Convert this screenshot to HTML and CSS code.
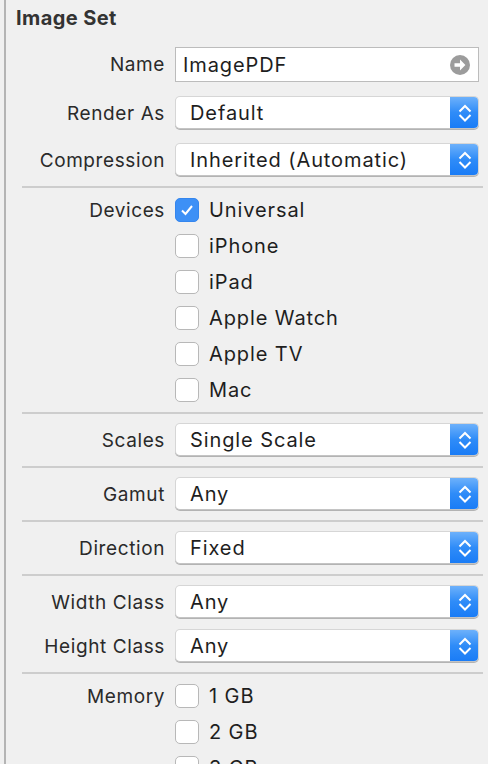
FILE: index.html
```html
<!DOCTYPE html>
<html>
<head>
<meta charset="utf-8">
<link rel="stylesheet" href="styles.css">
</head>
<body>
<div class="panel">
  <div class="title">Image Set</div>

  <div class="row row-name">
    <div class="label">Name</div>
    <div class="field">
      <span class="field-text">ImagePDF</span>
      <svg class="go" width="20" height="20" viewBox="0 0 20 20"><circle cx="10" cy="10" r="10" fill="#9c9c9c"/><path d="M4.5 8.2h5.5V4.6l5.4 5.4-5.4 5.4v-3.6H4.5z" fill="#fff"/></svg>
    </div>
  </div>

  <div class="row row-popup first">
    <div class="label">Render As</div>
    <div class="popup"><span class="popup-text">Default</span><span class="stepper"><svg width="16" height="24" viewBox="0 0 16 24"><path d="M2.5 10.5L8 5 13.5 10.5M2.5 14L8 19.5 13.5 14" fill="none" stroke="#fff" stroke-width="2"/></svg></span></div>
  </div>
  <div class="row row-popup">
    <div class="label">Compression</div>
    <div class="popup"><span class="popup-text">Inherited (Automatic)</span><span class="stepper"><svg width="16" height="24" viewBox="0 0 16 24"><path d="M2.5 10.5L8 5 13.5 10.5M2.5 14L8 19.5 13.5 14" fill="none" stroke="#fff" stroke-width="2"/></svg></span></div>
  </div>

  <div class="sep sep-a"></div>

  <div class="checks">
    <div class="check-row"><div class="label">Devices</div><span class="box checked"><svg width="14" height="12" viewBox="0 0 14 12"><path d="M2 6.5l3.5 3.5L12 2" fill="none" stroke="#fff" stroke-width="2"/></svg></span><span class="check-text">Universal</span></div>
    <div class="check-row"><div class="label"></div><span class="box"></span><span class="check-text">iPhone</span></div>
    <div class="check-row"><div class="label"></div><span class="box"></span><span class="check-text">iPad</span></div>
    <div class="check-row"><div class="label"></div><span class="box"></span><span class="check-text">Apple Watch</span></div>
    <div class="check-row"><div class="label"></div><span class="box"></span><span class="check-text">Apple TV</span></div>
    <div class="check-row"><div class="label"></div><span class="box"></span><span class="check-text">Mac</span></div>
  </div>

  <div class="sep"></div>
  <div class="row row-popup single">
    <div class="label">Scales</div>
    <div class="popup"><span class="popup-text">Single Scale</span><span class="stepper"><svg width="16" height="24" viewBox="0 0 16 24"><path d="M2.5 10.5L8 5 13.5 10.5M2.5 14L8 19.5 13.5 14" fill="none" stroke="#fff" stroke-width="2"/></svg></span></div>
  </div>
  <div class="sep"></div>
  <div class="row row-popup single">
    <div class="label">Gamut</div>
    <div class="popup"><span class="popup-text">Any</span><span class="stepper"><svg width="16" height="24" viewBox="0 0 16 24"><path d="M2.5 10.5L8 5 13.5 10.5M2.5 14L8 19.5 13.5 14" fill="none" stroke="#fff" stroke-width="2"/></svg></span></div>
  </div>
  <div class="sep"></div>
  <div class="row row-popup single">
    <div class="label">Direction</div>
    <div class="popup"><span class="popup-text">Fixed</span><span class="stepper"><svg width="16" height="24" viewBox="0 0 16 24"><path d="M2.5 10.5L8 5 13.5 10.5M2.5 14L8 19.5 13.5 14" fill="none" stroke="#fff" stroke-width="2"/></svg></span></div>
  </div>
  <div class="sep"></div>
  <div class="row row-popup pair-top">
    <div class="label">Width Class</div>
    <div class="popup"><span class="popup-text">Any</span><span class="stepper"><svg width="16" height="24" viewBox="0 0 16 24"><path d="M2.5 10.5L8 5 13.5 10.5M2.5 14L8 19.5 13.5 14" fill="none" stroke="#fff" stroke-width="2"/></svg></span></div>
  </div>
  <div class="row row-popup pair-bottom">
    <div class="label">Height Class</div>
    <div class="popup"><span class="popup-text">Any</span><span class="stepper"><svg width="16" height="24" viewBox="0 0 16 24"><path d="M2.5 10.5L8 5 13.5 10.5M2.5 14L8 19.5 13.5 14" fill="none" stroke="#fff" stroke-width="2"/></svg></span></div>
  </div>
  <div class="sep"></div>

  <div class="checks">
    <div class="check-row"><div class="label">Memory</div><span class="box"></span><span class="check-text">1 GB</span></div>
    <div class="check-row"><div class="label"></div><span class="box"></span><span class="check-text">2 GB</span></div>
    <div class="check-row"><div class="label"></div><span class="box"></span><span class="check-text">3 GB</span></div>
  </div>
</div>
</body>
</html>
```

FILE: styles.css
```css
html, body {
  margin: 0;
  padding: 0;
  height: 100%;
  overflow: hidden;
}
body {
  background: #f0f0f0;
  font-family: "Inter", "Liberation Sans", sans-serif;
  font-size: 19px;
  letter-spacing: 0.6px;
  color: #1e1e1e;
}
.panel {
  margin-left: 4px;
  border-left: 2px solid #b4b4b4;
  min-height: 100%;
  box-sizing: border-box;
}
.title {
  font-weight: 700;
  font-size: 20px;
  letter-spacing: 0.4px;
  line-height: 24px;
  padding: 6px 0 0 10px;
  height: 39px;
  box-sizing: border-box;
  color: #333;
}
.row {
  display: grid;
  grid-template-columns: 159px 304px;
  column-gap: 10px;
  align-items: center;
}
.label {
  text-align: right;
  color: #2a2a2a;
  white-space: nowrap;
}
.row-name {
  margin-top: 8px;
}
.field {
  height: 35px;
  box-sizing: border-box;
  border: 1px solid #bcbcbc;
  background: #fff;
  display: flex;
  align-items: center;
  padding: 0 8px 0 7px;
}
.field-text,
.popup-text,
.check-text {
  font-size: 20px;
  letter-spacing: 0.9px;
}
.field-text {
  flex: 1;
}
.go {
  display: block;
}
.row-popup.first {
  margin-top: 14px;
}
.row-popup {
  margin-top: 13px;
}
.row-popup.single {
  margin-top: 9px;
  margin-bottom: 9px;
}
.row-popup.pair-top {
  margin-top: 9px;
}
.row-popup.pair-bottom {
  margin-top: 10px;
  margin-bottom: 9px;
}
.popup {
  height: 33px;
  margin-bottom: 1px;
  box-sizing: border-box;
  background: #fff;
  border: 1px solid #d6d6d6;
  border-bottom-color: #c4c4c4;
  border-radius: 5px;
  box-shadow: 0 1px 0 #b3b3b3;
  display: flex;
  align-items: center;
  overflow: hidden;
}
.popup-text {
  flex: 1;
  padding-left: 14px;
  white-space: nowrap;
}
.stepper {
  width: 29px;
  height: 100%;
  margin-right: -1px;
  background: linear-gradient(#6db1fb, #2f8cf8 50%, #1a7cf6);
  display: flex;
  align-items: center;
  justify-content: center;
}
.stepper svg {
  display: block;
}
.sep {
  height: 2px;
  background: #cdcdcd;
  margin-left: 16px;
  margin-right: 5px;
}
.sep-a {
  margin-top: 9px;
}
.checks {
  padding-top: 10px;
  padding-bottom: 10px;
  display: flex;
  flex-direction: column;
  gap: 12px;
}
.check-row {
  display: grid;
  grid-template-columns: 159px 24px auto;
  column-gap: 10px;
  align-items: center;
  height: 24px;
}
.box {
  width: 24px;
  height: 24px;
  box-sizing: border-box;
  border: 1px solid #b8b8b8;
  border-radius: 5px;
  background: #fff;
  display: flex;
  align-items: center;
  justify-content: center;
}
.box.checked {
  background: #3d90f6;
  border-color: #3586ee;
}
```
